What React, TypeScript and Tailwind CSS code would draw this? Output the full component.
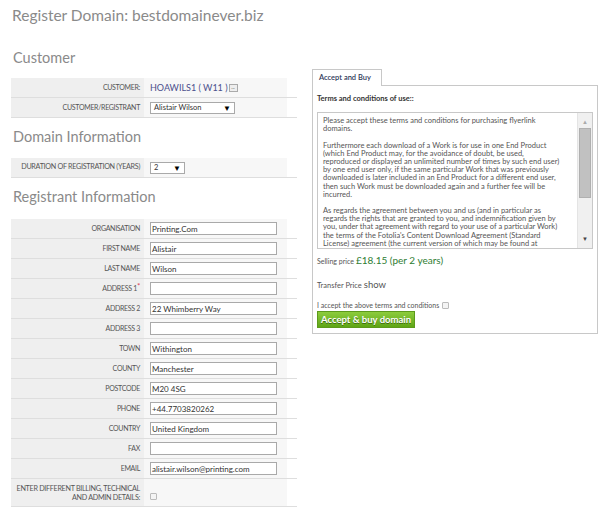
import React from 'react';

const font = { fontFamily: 'Lato, "Open Sans", Arial, sans-serif' };

function Row({ label, children, required }: { label: React.ReactNode; children?: React.ReactNode; required?: boolean }) {
  return (
    <div className="flex h-[20px] border-b border-[#dedede]">
      <div className="w-[133px] shrink-0 bg-[#efefef] flex items-center justify-end pr-[4px] text-[7px] tracking-[-0.3px] text-[#555] uppercase">
        {label}
        {required && <span className="text-[#e0405a] text-[8px] -mt-[6px]">*</span>}
      </div>
      <div className="w-[143px] bg-[#f7f7f7] flex items-center pl-[6px]">{children}</div>
      <div className="flex-1 bg-white" />
    </div>
  );
}

function Field({ value }: { value?: string }) {
  return (
    <div className="w-[127px] h-[13px] bg-white border border-[#a9a9a9] flex items-center px-[1px] text-[8px] text-[#333] leading-none">
      {value}
    </div>
  );
}

function Select({ value, width }: { value: string; width: string }) {
  return (
    <div className={`${width} h-[12px] bg-white border border-[#a9a9a9] flex items-center justify-between px-[3px] text-[7.5px] text-[#333] leading-none`}>
      <span>{value}</span>
      <span className="text-[8px] text-black">▼</span>
    </div>
  );
}

const registrant: [string, string | undefined, boolean?][] = [
  ['Organisation', 'Printing.Com'],
  ['First name', 'Alistair'],
  ['Last name', 'Wilson'],
  ['Address 1', '', true],
  ['Address 2', '22 Whimberry Way'],
  ['Address 3', ''],
  ['Town', 'Withington'],
  ['County', 'Manchester'],
  ['Postcode', 'M20 4SG'],
  ['Phone', '+44.7703820262'],
  ['Country', 'United Kingdom'],
  ['Fax', ''],
  ['Email', 'alistair.wilson@printing.com'],
];

// textarea content keeps its own line breaks
const terms = [
  'Please accept these terms and conditions for purchasing flyerlink',
  'domains.',
  '',
  'Furthermore each download of a Work is for use in one End Product',
  '(which End Product may, for the avoidance of doubt, be used,',
  'reproduced or displayed an unlimited number of times by such end user)',
  'by one end user only, if the same particular Work that was previously',
  'downloaded is later included in an End Product for a different end user,',
  'then such Work must be downloaded again and a further fee will be',
  'incurred.',
  '',
  'As regards the agreement between you and us (and in particular as',
  'regards the rights that are granted to you, and indemnification given by',
  'you, under that agreement with regard to your use of a particular Work)',
  "the terms of the Fotolia's Content Download Agreement (Standard",
  'License) agreement (the current version of which may be found at',
  'http://en.fotolia.com/Info/Agreements/StandardLicense) shall apply to',
];

export default function App() {
  return (
    <div className="w-[599px] h-[511px] bg-white overflow-hidden relative" style={font}>
      <h1 className="pl-[12px] pt-[5px] text-[15.5px] text-[#8a8a8a] leading-[20px]">Register Domain: bestdomainever.biz</h1>

      <div className="flex">
        {/* left column */}
        <div className="w-[297px] pl-[11px]">
          <h2 className="pl-[2px] mt-[24px] text-[14.5px] text-[#8a8a8a] leading-[18px]">Customer</h2>
          <div className="mt-[11px]">
            <Row label="Customer:">
              <span className="text-[9px] text-[#4b4f8c]">HOAWILS1 ( W11 )</span>
              <span className="ml-[1px] w-[9px] h-[8px] border border-[#aaa] bg-[#eee] text-[5px] leading-[5px] text-[#555] flex justify-center">...</span>
            </Row>
            <Row label="Customer/Registrant">
              <Select value="Alistair Wilson" width="w-[85px]" />
            </Row>
          </div>

          <h2 className="pl-[2px] mt-[10px] text-[14.5px] text-[#8a8a8a] leading-[18px]">Domain Information</h2>
          <div className="mt-[12px]">
            <div className="flex h-[20px] border-b border-[#dedede]">
              <div className="w-[133px] shrink-0 bg-[#efefef] flex items-center justify-end pr-[4px] text-[7.2px] tracking-[-0.3px] text-[#555] uppercase">
                Duration of registration (years)
              </div>
              <div className="w-[143px] bg-[#f7f7f7] flex items-center pl-[6px]">
                <Select value="2" width="w-[35px]" />
              </div>
              <div className="flex-1" />
            </div>
          </div>

          <h2 className="pl-[2px] mt-[10px] text-[14.5px] text-[#8a8a8a] leading-[18px]">Registrant Information</h2>
          <div className="mt-[13px]">
            {registrant.map(([l, v, r]) => (
              <Row key={l} label={l} required={r}>
                <Field value={v} />
              </Row>
            ))}
            <div className="flex h-[28px] border-b border-[#dedede]">
              <div className="w-[133px] shrink-0 bg-[#efefef] flex items-center justify-end text-right pr-[4px] text-[7.2px] tracking-[-0.3px] leading-[9px] text-[#555] uppercase">
                Enter different billing, technical<br />and admin details:
              </div>
              <div className="w-[143px] bg-[#f7f7f7] flex items-end pl-[6px] pb-[6px]">
                <span className="w-[7px] h-[7px] border border-[#bbb] bg-[#f4f4f4] rounded-[1px]" />
              </div>
              <div className="flex-1" />
            </div>
          </div>
        </div>

        {/* right column */}
        <div className="ml-[15px] mt-[43px] w-[286px]">
          <div className="flex">
            <div className="h-[17px] w-[70px] border border-b-0 border-[#c8c8c8] bg-white flex items-center pl-[6px] text-[7.5px] font-semibold text-[#2f3a5a] relative top-[1px]">
              Accept and Buy
            </div>
          </div>
          <div className="border border-[#c8c8c8] px-[4px] pt-[8px] pb-[5px]">
            <div className="text-[7.5px] font-bold text-[#333] leading-[10px]">Terms and conditions of use::</div>
            <div className="mt-[8px] h-[137px] border border-[#c8c8c8] flex overflow-hidden">
              <div className="flex-1 pl-[5px] pt-[4px] text-[7.5px] leading-[8.2px] text-[#555] whitespace-nowrap overflow-hidden">
                {terms.map((t, i) => (
                  <div key={i} className="h-[8.2px]">{t}</div>
                ))}
              </div>
              <div className="w-[15px] bg-[#f0f0f0] border-l border-[#e4e4e4] flex flex-col items-center">
                <span className="mt-[6px] text-[6px] leading-[6px] text-[#aaa]">▲</span>
                <div className="mt-[3px] w-[12px] h-[70px] bg-[#c1c1c1] border border-[#b0b0b0]" />
                <div className="flex-1" />
                <span className="mb-[6px] text-[6px] leading-[6px] text-[#444]">▼</span>
              </div>
            </div>
            <div className="mt-[4px] flex items-baseline gap-[2px] leading-[14px]">
              <span className="text-[7px] text-[#555]">Selling price</span>
              <span className="text-[10px] text-[#2e7d32]">£18.15 (per 2 years)</span>
            </div>
            <div className="mt-[10px] flex items-baseline gap-[2px] leading-[14px]">
              <span className="text-[7.5px] text-[#555]">Transfer Price</span>
              <span className="text-[9.5px] text-[#555]">show</span>
            </div>
            <div className="mt-[7px] flex items-center gap-[3px] h-[10px]">
              <span className="text-[7px] text-[#555]">I accept the above terms and conditions</span>
              <span className="w-[7px] h-[7px] border border-[#bbb] bg-[#f4f4f4] rounded-[1px]" />
            </div>
            <button className="block mt-[1px] h-[17px] w-[98px] border border-[#5c9a1b] bg-gradient-to-b from-[#8ccc3c] to-[#5fa514] text-white text-[9.5px] font-bold [text-shadow:0_1px_0_#3d6d0f] leading-none">
              Accept &amp; buy domain
            </button>
          </div>
        </div>
      </div>
    </div>
  );
}
